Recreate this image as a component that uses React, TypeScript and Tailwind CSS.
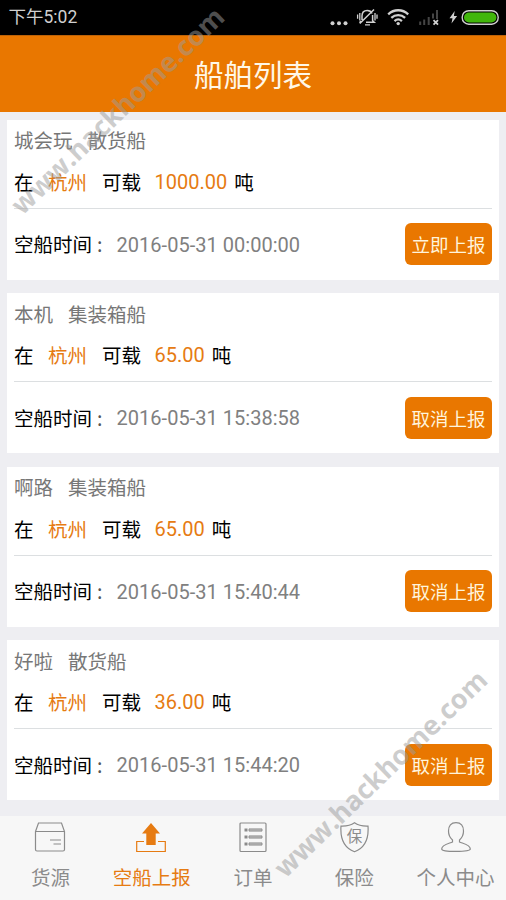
import type { ReactNode } from "react";
import clsx from "clsx";

type Ship = {
  name: string;
  type: string;
  city: string;
  load: string;
  time: string;
  action: string;
};

const ships: Ship[] = [
  { name: "城会玩", type: "散货船", city: "杭州", load: "1000.00", time: "2016-05-31 00:00:00", action: "立即上报" },
  { name: "本机", type: "集装箱船", city: "杭州", load: "65.00", time: "2016-05-31 15:38:58", action: "取消上报" },
  { name: "啊路", type: "集装箱船", city: "杭州", load: "65.00", time: "2016-05-31 15:40:44", action: "取消上报" },
  { name: "好啦", type: "散货船", city: "杭州", load: "36.00", time: "2016-05-31 15:44:20", action: "取消上报" },
];

function StatusBar() {
  return (
    <div className="flex h-[35px] shrink-0 items-center justify-between bg-black pl-[8.5px] pr-[7px] text-[#d0d0d0]">
      <span className="font-['Roboto','Noto_Sans_CJK_SC',sans-serif] text-[17.5px] leading-none">下午5:02</span>
      <svg width="170" height="35" viewBox="329 0 170 35" fill="none" stroke="#d0d0d0">
        <g fill="#d0d0d0" stroke="none">
          <circle cx="332.5" cy="23.3" r="2" />
          <circle cx="339" cy="23.3" r="2" />
          <circle cx="345.5" cy="23.3" r="2" />
        </g>
        {/* muted bell */}
        <path d="M362 20v-4c0-3.400 2.100-5.500 5.200-5.500 2.400 0 4.100 1.200 4.800 3M372.600 15v5.700l1.600 1.500H366M374 9.500 359.800 23.500M361 21l-1.500 1.800" strokeWidth="1.5" />
        <path d="M359.800 13v7.500M357.600 14.500v4.300M375 13v7.500M377 14.500v4.300M365 24.900h5" strokeWidth="1.3" />
        {/* wifi */}
        <g strokeWidth="2.3">
          <path d="M388.200 14.300c5.700-5.400 14.300-5.400 20 0" />
          <path d="M391.300 17.800c4-3.700 9.800-3.700 13.800 0" />
          <path d="M394.500 21.100c2.200-2 5.200-2 7.400 0" />
        </g>
        <circle cx="398.2" cy="23.6" r="1.7" fill="#d0d0d0" stroke="none" />
        {/* signal */}
        <path d="M420.200 21.500v3.500M424.200 19.500v5.500M428.700 17v8M433 13.500v5M437 10v9" stroke="#454545" strokeWidth="2" />
        <path d="m433.500 20.200 4.500 4.500m0-4.500-4.500 4.500" strokeWidth="1.8" />
        <path d="m454.700 11-5.200 7.200h3l-1 5.300 5.600-7.500h-3.200z" fill="#d0d0d0" stroke="none" />
        <rect x="462.200" y="10.700" width="36" height="13.5" rx="6.500" strokeWidth="1.4" />
        <rect x="464" y="12.5" width="32.4" height="10" rx="5" fill="#41b60b" stroke="none" />
      </svg>
    </div>
  );
}

function ShipCard({ ship }: { ship: Ship }) {
  return (
    <article className="flex h-[160px] flex-col bg-white px-[7px] text-[19.5px] leading-[28px] text-black">
      <div className="mt-[6.5px] flex h-[28px] gap-[15px] text-[#777]">
        <span>{ship.name}</span>
        <span>{ship.type}</span>
      </div>
      <div className="mt-[13.5px] flex h-[41px] border-b border-[#dcdfe1]">
        <span className="mr-[14.5px]">在</span>
        <span className="mr-[15px] text-[#e67b12]">{ship.city}</span>
        <span className="mr-[13.5px]">可载</span>
        <span className="mr-[7px] font-['Roboto','Noto_Sans_CJK_SC',sans-serif] text-[20px] text-[#e67b12]">{ship.load}</span>
        <span>吨</span>
      </div>
      <div className="flex h-[71px] items-center">
        <span className="w-[102.5px] whitespace-nowrap">
          空船时间<span className="ml-[5px] text-[#555]">:</span>
        </span>
        <span className="pt-px font-['Roboto','Noto_Sans_CJK_SC',sans-serif] text-[20px] tracking-[0.03px] text-[#808080]">{ship.time}</span>
        <button className="ml-auto h-[42px] w-[87px] rounded-[6px] bg-[#e97700] text-[18.5px] text-[#fff4dc]">
          {ship.action}
        </button>
      </div>
    </article>
  );
}

function NavItem({ label, active, children }: { label: string; active?: boolean; children: ReactNode }) {
  return (
    <a className={clsx("flex flex-1 flex-col items-center", active ? "text-[#e67b12]" : "text-[#8b8b8b]")}>
      <svg className="mt-[5px] mr-px" width="32" height="32" viewBox="0 0 32 32" fill="none" stroke="currentColor" strokeWidth="1.2">
        {children}
      </svg>
      <span className="mt-[10px] whitespace-nowrap text-[19.5px] leading-[28px]">{label}</span>
    </a>
  );
}

function BottomNav() {
  return (
    <nav className="flex h-[84px] shrink-0 bg-[#f7f7f7]">
      <NavItem label="货源">
        <path d="M1.500 10.500 4.500 2h23l3 8.500v18a1.500 1.500 0 0 1-1.500 1.500H3a1.500 1.500 0 0 1-1.500-1.500zM1.500 10.500h29M16 19h11M19.500 23h7.500" />
      </NavItem>
      <NavItem label="空船上报" active>
        <path d="M16 2 25 12.500H20.700v11.500h-9.400V12.500H7z" fill="currentColor" stroke="none" />
        <path d="M9 20.500H1.700v10h28.600v-10H23" />
      </NavItem>
      <NavItem label="订单">
        <rect x="3" y="2" width="26" height="28.5" rx="1" />
        <path d="M7.500 9h3M7.500 16h3M7.500 23h3" strokeWidth="2.8" />
        <path d="M12 7.900H25v2.200H12zM12 14.900H25v2.200H12zM12 21.900H25v2.200H12z" fill="#bbb" strokeWidth="0.9" />
      </NavItem>
      <NavItem label="保险">
        <path d="M16.500 1.700c3.700 2.600 8.300 3.500 13.500 3.300.8 11-2.200 21.500-13.500 25.700C5.200 26.500 2.200 16 3 5c5.200.2 9.800-.7 13.500-3.300z" />
        <text x="16.5" y="20.5" textAnchor="middle" fontSize="15.5" fill="currentColor" stroke="none">保</text>
      </NavItem>
      <NavItem label="个人中心">
        <path d="M17 1.700c5 0 7.500 3.300 7.500 8.300 0 3.800-1.500 6.800-4 9v2c3.500 1.500 10.800 2.500 10.800 7 0 1.600-4.500 2.400-14.300 2.400S2.700 29.600 2.700 28c0-4.500 7.300-5.500 10.800-7v-2c-2.500-2.200-4-5.200-4-9 0-5 2.500-8.300 7.500-8.300z" />
      </NavItem>
    </nav>
  );
}

const watermark =
  "pointer-events-none absolute -translate-x-1/2 -translate-y-1/2 rotate-[-44deg] whitespace-nowrap font-['Open_Sans',sans-serif] text-[27px] leading-none font-bold text-[#9c9c9c]/50";

export default function App() {
  return (
    <div className="relative flex h-[900px] w-[506px] flex-col overflow-hidden bg-[#eeeef2] font-['Noto_Sans_CJK_SC',sans-serif]">
      <StatusBar />
      <header className="flex h-[77px] shrink-0 items-center justify-center border-t border-[#bd6207] bg-[#e97700] text-[29.5px] leading-none text-[#fff8e8]">
        船舶列表
      </header>
      <main className="flex h-[704px] shrink-0 flex-col gap-[13.6px] px-[7px] pt-[7.5px]">
        {ships.map((ship) => (
          <ShipCard key={ship.time} ship={ship} />
        ))}
      </main>
      <BottomNav />
      <span className={clsx(watermark, "left-[117px] top-[110px]")}>www.hackhome.com</span>
      <span className={clsx(watermark, "left-[380px] top-[773px]")}>www.hackhome.com</span>
    </div>
  );
}
